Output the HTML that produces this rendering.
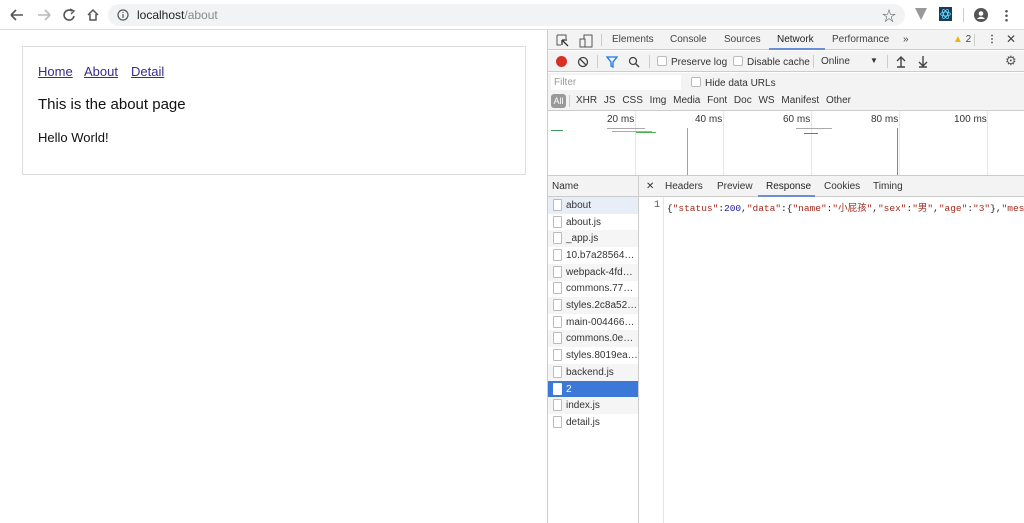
<!DOCTYPE html>
<html><head><meta charset="utf-8"><style>
*{margin:0;padding:0;box-sizing:border-box}
body{width:1024px;height:523px;overflow:hidden;background:#fff;font-family:"Liberation Sans","Noto Sans CJK SC",sans-serif;position:relative;color:#222}
.a{position:absolute}
.dt{font-size:10px;color:#333}
.tab{position:absolute;top:34px;font-size:10px;color:#444}
.row{position:absolute;left:548px;width:90px;height:17px;font-size:10px;color:#333;line-height:17px;padding-left:18px;white-space:nowrap;overflow:hidden}
.row i{position:absolute;left:5px;top:2px;width:9px;height:12px;border:1px solid #bbb;background:#fff;border-radius:1px}
.vl{position:absolute;top:111px;height:64px;width:1px;background:#e8e8e8}
.cb{display:inline-block;width:10px;height:10px;border:1px solid #bbb;border-radius:2px;background:#fff;vertical-align:-1px;margin-right:4px}
</style></head><body>
<div class="a" style="left:0;top:0;width:1024px;height:30px;background:#fff;border-bottom:1px solid #ddd"></div>
<svg class="a" style="left:8px;top:7px" width="100" height="16" viewBox="0 0 100 16">
<path d="M3 8H15M3 8L8 3M3 8L8 13" stroke="#555" stroke-width="1.6" fill="none"/>
<path d="M30 8H42M42 8L37 3M42 8L37 13" stroke="#bbb" stroke-width="1.6" fill="none"/>
<path d="M64 4A5 5 0 1 0 66 9" stroke="#555" stroke-width="1.6" fill="none"/><path d="M62 2L66 4L63 7" stroke="#555" stroke-width="1.4" fill="none"/>
<path d="M80 8L85 3L90 8M82 7V13H88V7" stroke="#555" stroke-width="1.5" fill="none"/>
</svg>
<div class="a" style="left:108px;top:4px;width:797px;height:22px;border-radius:11px;background:#f1f3f4"></div>
<svg class="a" style="left:117px;top:9px" width="12" height="12"><circle cx="6" cy="6" r="5" stroke="#555" stroke-width="1.2" fill="none"/><path d="M6 5V9M6 3V4" stroke="#555" stroke-width="1.2"/></svg>
<div class="a" style="left:137px;top:8px;font-size:12px;color:#222">localhost<span style="color:#888">/about</span></div>
<div class="a" style="left:882px;top:6px;font-size:14px;color:#555">☆</div>
<div class="a" style="left:915px;top:8px;width:0;height:0;border-left:6px solid transparent;border-right:6px solid transparent;border-top:12px solid #999"></div>
<div class="a" style="left:939px;top:7px;width:13px;height:14px;background:#1f3a57"></div>
<svg class="a" style="left:939px;top:7px" width="13" height="14"><ellipse cx="6.5" cy="7" rx="5" ry="2" stroke="#61dafb" fill="none" stroke-width=".8"/><ellipse cx="6.5" cy="7" rx="5" ry="2" stroke="#61dafb" fill="none" stroke-width=".8" transform="rotate(60 6.5 7)"/><ellipse cx="6.5" cy="7" rx="5" ry="2" stroke="#61dafb" fill="none" stroke-width=".8" transform="rotate(120 6.5 7)"/></svg>
<div class="a" style="left:963px;top:8px;width:1px;height:14px;background:#ccc"></div>
<svg class="a" style="left:974px;top:8px" width="14" height="14"><circle cx="7" cy="7" r="7" fill="#555"/><circle cx="7" cy="5.5" r="2.3" fill="#fff"/><path d="M3 11Q7 6.5 11 11" fill="#fff"/></svg>
<div class="a" style="left:1005px;top:9px;width:3px;height:13px;background:radial-gradient(circle,#555 1.2px,transparent 1.4px) 0 0/3px 4.5px"></div>

<div class="a" style="left:22px;top:46px;width:504px;height:129px;border:1px solid #ddd"></div>
<div class="a" style="left:38px;top:64px;font-size:13px;color:#3c2a8a;text-decoration:underline">Home</div>
<div class="a" style="left:84px;top:64px;font-size:13px;color:#3c2a8a;text-decoration:underline">About</div>
<div class="a" style="left:131px;top:64px;font-size:13px;color:#3c2a8a;text-decoration:underline">Detail</div>
<div class="a" style="left:38px;top:96px;font-size:15px;color:#111">This is the about page</div>
<div class="a" style="left:38px;top:130px;font-size:13px;color:#111">Hello World!</div>

<div class="a" style="left:547px;top:30px;width:1px;height:493px;background:#ccc"></div>
<div class="a" style="left:548px;top:30px;width:476px;height:20px;background:#f3f3f3;border-bottom:1px solid #ccc"></div>
<svg class="a" style="left:556px;top:34px" width="40" height="14"><path d="M1 1H10V5M1 1V11H5" stroke="#555" fill="none"/><path d="M6 6L12 12M6 6V11M6 6H11" stroke="#333" stroke-width="1.3" fill="none"/><rect x="28" y="1" width="8" height="12" stroke="#555" fill="none"/><rect x="24" y="5" width="5" height="8" stroke="#555" fill="#f3f3f3"/></svg>
<div class="a" style="left:601px;top:34px;width:1px;height:12px;background:#ccc"></div>
<div class="tab" style="left:612px">Elements</div>
<div class="tab" style="left:670px">Console</div>
<div class="tab" style="left:724px">Sources</div>
<div class="tab" style="left:777px;color:#222">Network</div>
<div class="a" style="left:769px;top:48px;width:56px;height:2px;background:#6a8fd8"></div>
<div class="tab" style="left:832px">Performance</div>
<div class="tab" style="left:903px">»</div>
<div class="tab" style="left:953px"><span style="color:#f0b400">▲</span> 2</div>
<div class="a" style="left:974px;top:34px;width:1px;height:12px;background:#ccc"></div>
<div class="tab" style="left:987px;font-weight:bold">⋮</div>
<div class="tab" style="left:1006px;font-size:12px;top:32px">✕</div>

<div class="a" style="left:548px;top:51px;width:476px;height:21px;background:#f3f3f3;border-bottom:1px solid #ccc"></div>
<div class="a" style="left:556px;top:56px;width:11px;height:11px;border-radius:50%;background:#d93025"></div>
<svg class="a" style="left:577px;top:56px" width="12" height="12"><circle cx="6" cy="6" r="4.5" stroke="#444" stroke-width="1.3" fill="none"/><path d="M3 3L9 9" stroke="#444" stroke-width="1.3"/></svg>
<div class="a" style="left:597px;top:55px;width:1px;height:13px;background:#ccc"></div>
<svg class="a" style="left:606px;top:56px" width="12" height="12"><path d="M1 1H11L7 6V11L5 10V6Z" stroke="#1a73e8" stroke-width="1.3" fill="none"/></svg>
<svg class="a" style="left:628px;top:56px" width="12" height="12"><circle cx="5" cy="5" r="3.5" stroke="#444" stroke-width="1.3" fill="none"/><path d="M7.5 7.5L11 11" stroke="#444" stroke-width="1.5"/></svg>
<div class="a" style="left:649px;top:55px;width:1px;height:13px;background:#ccc"></div>
<div class="a dt" style="left:657px;top:56px"><span class="cb"></span>Preserve log</div>
<div class="a dt" style="left:733px;top:56px"><span class="cb"></span>Disable cache</div>
<div class="a" style="left:813px;top:55px;width:1px;height:13px;background:#ccc"></div>
<div class="a dt" style="left:821px;top:56px">Online</div>
<div class="a dt" style="left:870px;top:56px;font-size:8px">▼</div>
<div class="a" style="left:887px;top:55px;width:1px;height:13px;background:#ccc"></div>
<svg class="a" style="left:895px;top:55px" width="34" height="13"><path d="M6 12V3M2 6L6 2L10 6M2 12H10" stroke="#444" stroke-width="1.4" fill="none"/><path d="M28 1V10M24 7L28 11L32 7M24 12H32" stroke="#444" stroke-width="1.4" fill="none"/></svg>
<div class="a dt" style="left:1005px;top:53px;font-size:13px;color:#555">⚙</div>

<div class="a" style="left:548px;top:73px;width:476px;height:38px;background:#f3f3f3;border-bottom:1px solid #ccc"></div>
<div class="a" style="left:551px;top:75px;width:130px;height:15px;background:#fff"></div>
<div class="a dt" style="left:554px;top:77px;color:#999">Filter</div>
<div class="a dt" style="left:691px;top:77px"><span class="cb"></span>Hide data URLs</div>
<div class="a" style="left:551px;top:94px;width:15px;height:14px;border-radius:3px;background:#999;color:#fff;font-size:9px;text-align:center;line-height:14px">All</div>
<div class="a" style="left:569px;top:95px;width:1px;height:12px;background:#ccc"></div>
<div class="a dt" style="left:576px;top:95px;word-spacing:4px">XHR JS CSS Img Media Font Doc WS Manifest Other</div>

<div class="vl" style="left:635px"></div><div class="vl" style="left:723px"></div><div class="vl" style="left:811px"></div><div class="vl" style="left:899px"></div><div class="vl" style="left:987px"></div>
<div class="a dt" style="left:607px;top:114px">20 ms</div>
<div class="a dt" style="left:695px;top:114px">40 ms</div>
<div class="a dt" style="left:783px;top:114px">60 ms</div>
<div class="a dt" style="left:871px;top:114px">80 ms</div>
<div class="a dt" style="left:954px;top:114px">100 ms</div>
<div class="a" style="left:551px;top:130px;width:12px;height:1px;background:#3a9a5a"></div>
<div class="a" style="left:607px;top:128px;width:38px;height:1px;background:#aaa"></div>
<div class="a" style="left:612px;top:131px;width:40px;height:1px;background:#aaa"></div>
<div class="a" style="left:636px;top:132px;width:20px;height:1px;background:#4caf50"></div>
<div class="a" style="left:796px;top:128px;width:36px;height:1px;background:#aaa"></div>
<div class="a" style="left:804px;top:133px;width:14px;height:1px;background:#3a9a5a"></div>
<div class="a" style="left:687px;top:128px;width:1px;height:47px;background:#8aa0e0"></div>
<div class="a" style="left:897px;top:128px;width:1px;height:47px;background:#d0703a"></div>

<div class="a" style="left:548px;top:175px;width:476px;height:22px;background:#f3f3f3;border-top:1px solid #ccc;border-bottom:1px solid #ccc"></div>
<div class="a dt" style="left:552px;top:181px">Name</div>
<div class="a" style="left:638px;top:176px;width:1px;height:347px;background:#ccc"></div>
<div class="a dt" style="left:646px;top:181px">✕</div>
<div class="a dt" style="left:665px;top:181px">Headers</div>
<div class="a dt" style="left:717px;top:181px">Preview</div>
<div class="a dt" style="left:766px;top:181px;color:#222">Response</div>
<div class="a" style="left:758px;top:195px;width:57px;height:2px;background:#6a8fd8"></div>
<div class="a dt" style="left:824px;top:181px">Cookies</div>
<div class="a dt" style="left:873px;top:181px">Timing</div>

<div class="row" style="top:197px;background:#e8eef8"><i></i>about</div>
<div class="row" style="top:214px"><i></i>about.js</div>
<div class="row" style="top:230px;background:#f5f5f5"><i></i>_app.js</div>
<div class="row" style="top:247px"><i></i>10.b7a28564…</div>
<div class="row" style="top:264px;background:#f5f5f5"><i></i>webpack-4fd…</div>
<div class="row" style="top:280px"><i></i>commons.77…</div>
<div class="row" style="top:297px;background:#f5f5f5"><i></i>styles.2c8a52…</div>
<div class="row" style="top:314px"><i></i>main-004466…</div>
<div class="row" style="top:330px;background:#f5f5f5"><i></i>commons.0e…</div>
<div class="row" style="top:347px"><i></i>styles.8019ea…</div>
<div class="row" style="top:364px;background:#f5f5f5"><i></i>backend.js</div>
<div class="row" style="top:381px;background:#3b78d8;color:#fff"><i style="border-color:#fff"></i>2</div>
<div class="row" style="top:397px;background:#f5f5f5"><i></i>index.js</div>
<div class="row" style="top:414px"><i></i>detail.js</div>

<div class="a" style="left:663px;top:197px;width:1px;height:326px;background:#e5e5e5"></div>
<div class="a" style="left:654px;top:200px;font-size:10px;color:#555;font-family:'Liberation Mono',monospace">1</div>
<div class="a" style="left:667px;top:200px;font-size:9.5px;white-space:nowrap;font-family:'Liberation Mono','Noto Sans CJK SC',monospace;color:#222">{<span style="color:#a3291c">"status"</span>:<span style="color:#1c1aa3">200</span>,<span style="color:#a3291c">"data"</span>:{<span style="color:#a3291c">"name"</span>:<span style="color:#a3291c">"小屁孩"</span>,<span style="color:#a3291c">"sex"</span>:<span style="color:#a3291c">"男"</span>,<span style="color:#a3291c">"age"</span>:<span style="color:#a3291c">"3"</span>},<span style="color:#a3291c">"message"</span></div>
</body></html>
